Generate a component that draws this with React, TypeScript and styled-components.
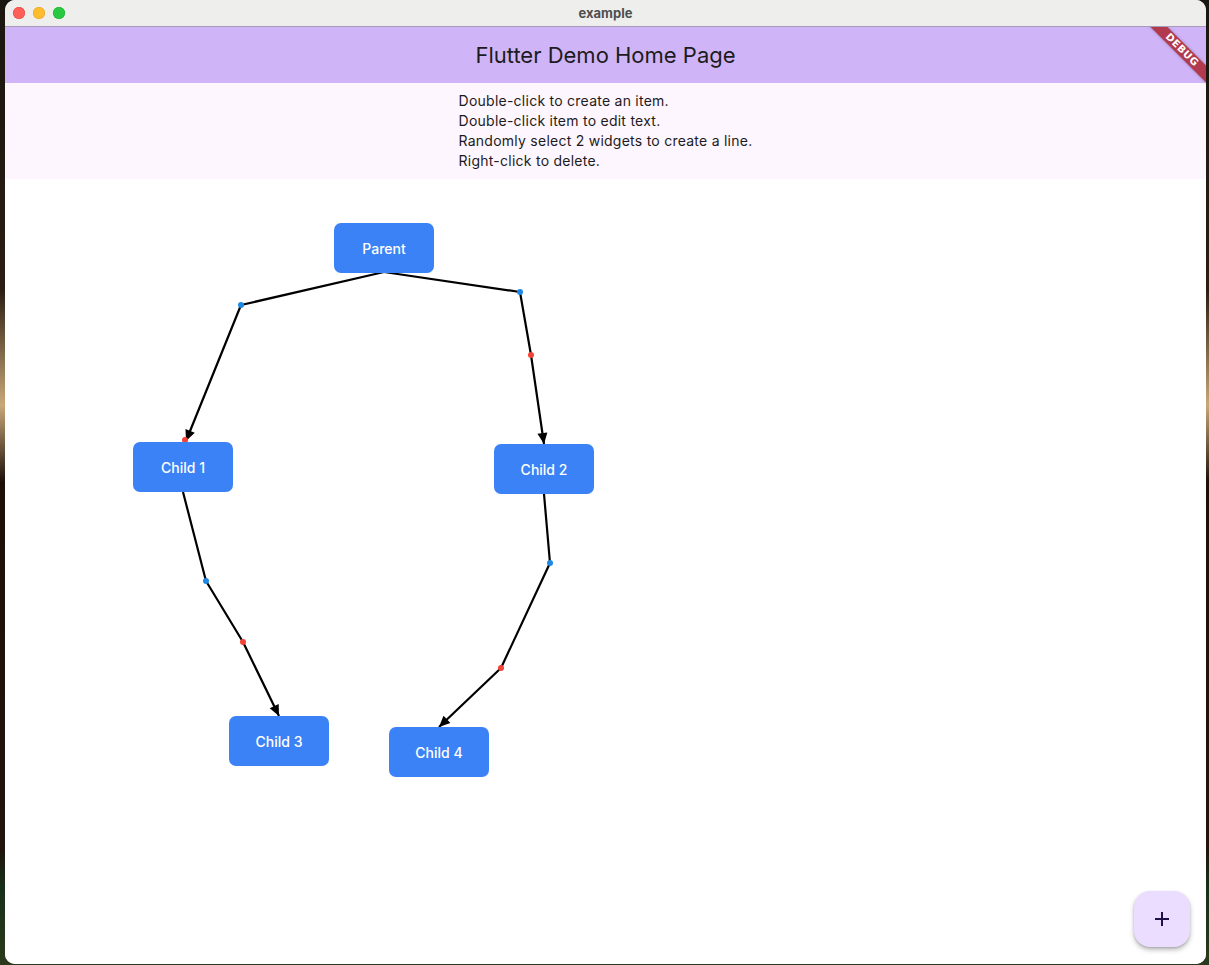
import React from 'react'
import styled, { createGlobalStyle } from 'styled-components'

type Pt = [number, number]

interface NodeItem {
  id: string
  label: string
  x: number
  y: number
}

interface Edge {
  points: Pt[]
  blue: Pt
  red: Pt
}

const nodes: NodeItem[] = [
  { id: 'p', label: 'Parent', x: 329, y: 44 },
  { id: 'c1', label: 'Child 1', x: 128, y: 263 },
  { id: 'c2', label: 'Child 2', x: 489, y: 265 },
  { id: 'c3', label: 'Child 3', x: 224, y: 537 },
  { id: 'c4', label: 'Child 4', x: 384, y: 548 },
]

const edges: Edge[] = [
  { points: [[379, 93], [236, 126], [181, 262]], blue: [236, 126], red: [180, 261] },
  { points: [[379, 93], [515, 113], [526, 176], [539, 265]], blue: [515, 113], red: [526, 176] },
  { points: [[178, 313], [201, 402], [238, 463], [274, 537]], blue: [201, 402], red: [238, 463] },
  { points: [[539, 315], [545, 384], [496, 489], [434, 548]], blue: [545, 384], red: [496, 489] },
]

const hints = [
  'Double-click to create an item.',
  'Double-click item to edit text.',
  'Randomly select 2 widgets to create a line.',
  'Right-click to delete.',
]

const arrowHead = (from: Pt, to: Pt) => {
  const ang = Math.atan2(to[1] - from[1], to[0] - from[0])
  const len = 11
  const half = 5
  const bx = to[0] - len * Math.cos(ang)
  const by = to[1] - len * Math.sin(ang)
  const px = -Math.sin(ang) * half
  const py = Math.cos(ang) * half
  return `${to[0]},${to[1]} ${bx + px},${by + py} ${bx - px},${by - py}`
}

const App: React.FC = () => {
  return (
    <>
      <GlobalStyle />
      <Desktop>
        <Window>
          <TitleBar>
            <Lights>
              <Light color="#fe5f57" border="#e0443e" />
              <Light color="#febc2e" border="#dea123" />
              <Light color="#28c840" border="#1aab29" />
            </Lights>
            <WindowTitle>example</WindowTitle>
          </TitleBar>
          <Body>
            <AppBar>Flutter Demo Home Page</AppBar>
            <InfoPanel>
              <InfoColumn>
                {hints.map((h) => (
                  <InfoLine key={h}>{h}</InfoLine>
                ))}
              </InfoColumn>
            </InfoPanel>
            <Canvas>
              <Lines width="1201" height="785">
                {edges.map((e, i) => {
                  const pts = e.points
                  const last = pts[pts.length - 1]
                  const prev = pts[pts.length - 2]
                  return (
                    <g key={i}>
                      <polyline
                        points={pts.map((p) => p.join(',')).join(' ')}
                        fill="none"
                        stroke="#000"
                        strokeWidth={2.2}
                        strokeLinejoin="round"
                      />
                      <polygon points={arrowHead(prev, last)} fill="#000" />
                      <circle cx={e.blue[0]} cy={e.blue[1]} r={3} fill="#1e88e5" />
                      <circle cx={e.red[0]} cy={e.red[1]} r={3} fill="#f44336" />
                    </g>
                  )
                })}
              </Lines>
              {nodes.map((n) => (
                <NodeBox key={n.id} style={{ left: n.x, top: n.y }}>
                  {n.label}
                </NodeBox>
              ))}
            </Canvas>
            <Fab aria-label="add">
              <svg width="16" height="16" viewBox="0 0 16 16">
                <path d="M8 1v14M1 8h14" stroke="#1d1148" strokeWidth="2" />
              </svg>
            </Fab>
            <BannerClip>
              <Ribbon>DEBUG</Ribbon>
            </BannerClip>
          </Body>
        </Window>
      </Desktop>
    </>
  )
}

const GlobalStyle = createGlobalStyle`
  html, body {
    margin: 0;
    padding: 0;
  }
  body {
    font-family: Inter, 'Noto Sans', sans-serif;
    overflow: hidden;
  }
`

const Desktop = styled.div`
  width: 1209px;
  height: 965px;
  background: linear-gradient(
    180deg,
    #1a1610 0%,
    #2a1d12 30%,
    #c8a878 42%,
    #1c0f08 50%,
    #20140c 88%,
    #163018 92%,
    #2c3a1c 100%
  );
  padding-left: 5px;
  box-sizing: border-box;
`

const Window = styled.div`
  width: 1201px;
  height: 964px;
  border-radius: 10px;
  overflow: hidden;
  display: flex;
  flex-direction: column;
  background: #fff;
`

const TitleBar = styled.div`
  height: 27px;
  flex-shrink: 0;
  background: #eeeeec;
  border-bottom: 1px solid #a89bb8;
  box-sizing: border-box;
  display: flex;
  align-items: center;
  position: relative;
`

const Lights = styled.div`
  display: flex;
  gap: 8px;
  padding-left: 8px;
`

const Light = styled.span<{ color: string; border: string }>`
  width: 12px;
  height: 12px;
  border-radius: 50%;
  background: ${({ color }) => color};
  box-shadow: inset 0 0 0 0.5px ${({ border }) => border};
`

const WindowTitle = styled.div`
  position: absolute;
  left: 0;
  right: 0;
  text-align: center;
  font-family: Inter, sans-serif;
  font-weight: 700;
  font-size: 13px;
  color: #4f4f4f;
  pointer-events: none;
`

const Body = styled.div`
  flex: 1;
  display: flex;
  flex-direction: column;
  position: relative;
  min-height: 0;
`

const AppBar = styled.div`
  height: 56px;
  flex-shrink: 0;
  background: #cfb5f7;
  display: flex;
  align-items: center;
  justify-content: center;
  font-size: 22px;
  color: #1d1b20;
`

const InfoPanel = styled.div`
  background: #fef6ff;
  padding: 8px 0;
  display: flex;
  justify-content: center;
`

const InfoColumn = styled.div`
  display: flex;
  flex-direction: column;
`

const InfoLine = styled.div`
  font-size: 14px;
  line-height: 20px;
  letter-spacing: 0.25px;
  color: #1d1b20;
`

const Canvas = styled.div`
  flex: 1;
  position: relative;
  background: #fff;
`

const Lines = styled.svg`
  position: absolute;
  left: 0;
  top: 0;
`

const NodeBox = styled.div`
  position: absolute;
  width: 100px;
  height: 50px;
  border-radius: 7px;
  background: #3b82f6;
  color: #fff;
  font-size: 14px;
  font-weight: 500;
  display: flex;
  align-items: center;
  justify-content: center;
`

const Fab = styled.button`
  position: absolute;
  right: 16px;
  bottom: 17px;
  width: 56px;
  height: 56px;
  border: none;
  border-radius: 16px;
  background: #eaddff;
  box-shadow: 0 3px 5px rgba(0, 0, 0, 0.25), 0 1px 2px rgba(0, 0, 0, 0.15);
  display: flex;
  align-items: center;
  justify-content: center;
  padding: 0;
`

const BannerClip = styled.div`
  position: absolute;
  top: 0;
  right: 0;
  width: 80px;
  height: 80px;
  overflow: hidden;
  pointer-events: none;
`

const Ribbon = styled.div`
  position: absolute;
  top: 17px;
  left: -4px;
  width: 120px;
  height: 12px;
  transform: rotate(45deg);
  background: rgba(170, 30, 40, 0.82);
  box-shadow: 0 0 3px rgba(0, 0, 0, 0.3);
  color: #fff;
  font-family: 'DejaVu Sans', sans-serif;
  font-weight: 900;
  font-size: 10px;
  letter-spacing: 0.6px;
  line-height: 12px;
  text-align: center;
`

export default App
